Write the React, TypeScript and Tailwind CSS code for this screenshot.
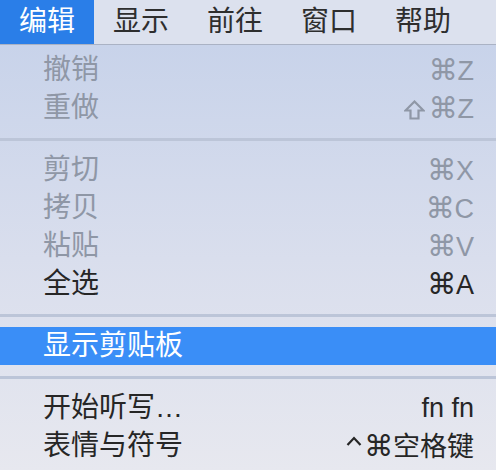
import React from "react";

const font = { fontFamily: '"Liberation Sans", "Noto Sans CJK SC", "DejaVu Sans", sans-serif' };
const sym = { fontFamily: '"DejaVu Sans", sans-serif' };

type Item = { label: string; key?: React.ReactNode; disabled?: boolean; active?: boolean } | "sep";

const S = () => (
  <span style={sym} className="text-[29px] font-normal">⌘</span>
);

const Shift = () => (
  <svg viewBox="0 0 21 20" className="w-[21px] h-[20px] shrink-0 mr-[4px] self-center mt-[3px]">
    <path d="M10.5 1.5 L19.5 10.5 L14.5 10.5 L14.5 18.5 L6.5 18.5 L6.5 10.5 L1.5 10.5 Z" fill="none" stroke="currentColor" strokeWidth="2.2" strokeLinejoin="miter" />
  </svg>
);

const Ctrl = () => (
  <svg viewBox="0 0 16 12" className="w-[16px] h-[12px] shrink-0 mr-[2px] self-start mt-[8px]">
    <polyline points="1.5,10 8,3 14.5,10" fill="none" stroke="currentColor" strokeWidth="2.2" />
  </svg>
);

const items: Item[] = [
  { label: "撤销", key: <><S />Z</>, disabled: true },
  { label: "重做", key: <><Shift /><S />Z</>, disabled: true },
  "sep",
  { label: "剪切", key: <><S />X</>, disabled: true },
  { label: "拷贝", key: <><S />C</>, disabled: true },
  { label: "粘贴", key: <><S />V</>, disabled: true },
  { label: "全选", key: <><S />A</> },
  "sep",
  { label: "显示剪贴板", active: true },
  "sep",
  { label: "开始听写…", key: "fn fn" },
  { label: "表情与符号", key: <><Ctrl /><S />空格键</> },
];

export default function App() {
  const bar = ["编辑", "显示", "前往", "窗口", "帮助"];
  return (
    <div className="w-[496px] h-[470px] overflow-hidden flex flex-col" style={font}>
      <div className="h-[45px] flex bg-[#dce1ee] border-b border-[#aab2c4] text-[28px] leading-[44px] text-[#2e2e2e]">
        {bar.map((b, i) => (
          <div
            key={b}
            className={
              "w-[94px] text-center " + (i === 0 ? "bg-[#2a7ee8] text-white" : "")
            }
          >
            {b}
          </div>
        ))}
      </div>
      <div className="flex-1 flex flex-col pt-[6px] bg-gradient-to-b from-[#c8d3ea] via-[#d9deed] to-[#e7e8ef]">
        {items.map((it, i) =>
          it === "sep" ? (
            <div key={i} className="h-[24px] flex items-center">
              <div className="w-full h-[3px] bg-[#bcc5d8]" />
            </div>
          ) : (
            <div
              key={i}
              className={
                "h-[38px] flex items-center justify-between pl-[43px] pr-[22px] text-[28px] " +
                (it.active
                  ? "bg-[#3a8ef7] text-white"
                  : it.disabled
                  ? "text-[#8f97a6]"
                  : "text-[#262626]")
              }
            >
              <span>{it.label}</span>
              {it.key && <span className="text-[27px] flex items-baseline h-[38px] leading-[38px]">{it.key}</span>}
            </div>
          )
        )}
      </div>
    </div>
  );
}
